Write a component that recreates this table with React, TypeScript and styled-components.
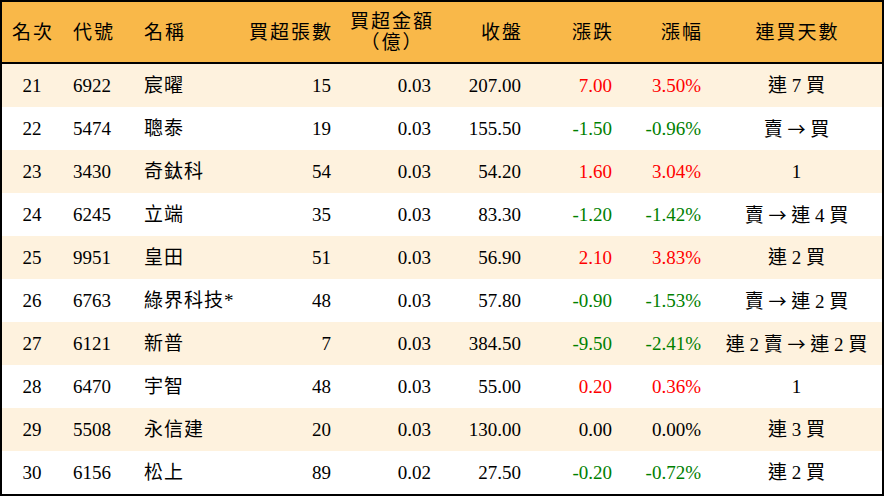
import React from "react";
import styled, { createGlobalStyle } from "styled-components";

const Global = createGlobalStyle`
  html, body { margin: 0; padding: 0; background: #fff; }
  body { font-family: "Liberation Serif", "Noto Sans CJK TC", serif; }
`;

const COLS = "60px 72px 96px 111px 100px 90px 91px 89px 171px";

const Frame = styled.div`
  width: 884px;
  height: 496px;
  box-sizing: border-box;
  border: 2px solid #000;
  display: flex;
  flex-direction: column;
  overflow: hidden;
`;

const HeaderRow = styled.div`
  display: grid;
  grid-template-columns: ${COLS};
  height: 60px;
  background: #f9b849;
  border-bottom: 2px solid #000;
`;

const BodyRow = styled.div<{ $alt: boolean }>`
  display: grid;
  grid-template-columns: ${COLS};
  height: 43px;
  background: ${(p) => (p.$alt ? "#fef2de" : "#ffffff")};
`;

type Align = "left" | "right" | "center";

const Cell = styled.div<{
  $align: Align;
  $pl?: number;
  $pr?: number;
  $color?: string;
  $spacing?: number;
}>`
  display: flex;
  flex-direction: column;
  justify-content: center;
  align-items: ${(p) =>
    p.$align === "left" ? "flex-start" : p.$align === "right" ? "flex-end" : "center"};
  text-align: ${(p) => p.$align};
  padding-left: ${(p) => p.$pl ?? 0}px;
  padding-right: ${(p) => p.$pr ?? 0}px;
  font-size: 19px;
  line-height: 21px;
  color: ${(p) => p.$color ?? "#000"};
  white-space: nowrap;
  letter-spacing: ${(p) => p.$spacing ?? 0}px;
`;

const HeadText = styled.span`
  letter-spacing: 2px;
  margin-right: -2px;
`;

const Arrow = styled.span`
  font-family: "Noto Sans CJK TC", sans-serif;
  font-size: 18px;
`;

const cols: { align: Align; pl?: number; pr?: number; head?: Align; spacing?: number }[] = [
  { align: "center" },
  { align: "left", pl: 11 },
  { align: "left", pl: 10, spacing: 1 },
  { align: "right", pr: 10 },
  { align: "right", pr: 10, head: "center" },
  { align: "right", pr: 10 },
  { align: "right", pr: 10 },
  { align: "right", pr: 10 },
  { align: "center" },
];

const heads: string[][] = [
  ["名次"],
  ["代號"],
  ["名稱"],
  ["買超張數"],
  ["買超金額", "（億）"],
  ["收盤"],
  ["漲跌"],
  ["漲幅"],
  ["連買天數"],
];

const rows: string[][] = [
  ["21", "6922", "宸曜", "15", "0.03", "207.00", "7.00", "3.50%", "連 7 買"],
  ["22", "5474", "聰泰", "19", "0.03", "155.50", "-1.50", "-0.96%", "賣 → 買"],
  ["23", "3430", "奇鈦科", "54", "0.03", "54.20", "1.60", "3.04%", "1"],
  ["24", "6245", "立端", "35", "0.03", "83.30", "-1.20", "-1.42%", "賣 → 連 4 買"],
  ["25", "9951", "皇田", "51", "0.03", "56.90", "2.10", "3.83%", "連 2 買"],
  ["26", "6763", "綠界科技*", "48", "0.03", "57.80", "-0.90", "-1.53%", "賣 → 連 2 買"],
  ["27", "6121", "新普", "7", "0.03", "384.50", "-9.50", "-2.41%", "連 2 賣 → 連 2 買"],
  ["28", "6470", "宇智", "48", "0.03", "55.00", "0.20", "0.36%", "1"],
  ["29", "5508", "永信建", "20", "0.03", "130.00", "0.00", "0.00%", "連 3 買"],
  ["30", "6156", "松上", "89", "0.02", "27.50", "-0.20", "-0.72%", "連 2 買"],
];

const changeColor = (v: string) => {
  const n = parseFloat(v);
  if (n > 0) return "#ff0000";
  if (n < 0) return "#008000";
  return "#000";
};

const renderStreak = (v: string) => {
  const parts = v.split("→");
  return parts.map((p, i) => (
    <React.Fragment key={i}>
      {i > 0 && <Arrow>→</Arrow>}
      {p}
    </React.Fragment>
  ));
};

export default function App() {
  return (
    <>
      <Global />
      <Frame>
        <HeaderRow>
          {heads.map((h, i) => (
            <Cell
              key={i}
              $align={cols[i].head ?? cols[i].align}
              $pl={cols[i].pl}
              $pr={cols[i].head ? 0 : cols[i].pr}
            >
              {h.map((line, j) => (
                <HeadText key={j}>{line}</HeadText>
              ))}
            </Cell>
          ))}
        </HeaderRow>
        {rows.map((r, ri) => (
          <BodyRow key={ri} $alt={ri % 2 === 0}>
            {r.map((v, i) => (
              <Cell
                key={i}
                $align={cols[i].align}
                $pl={cols[i].pl}
                $pr={cols[i].pr}
                $spacing={cols[i].spacing}
                $color={i === 6 || i === 7 ? changeColor(v) : undefined}
              >
                {i === 8 ? <span>{renderStreak(v)}</span> : v}
              </Cell>
            ))}
          </BodyRow>
        ))}
      </Frame>
    </>
  );
}
